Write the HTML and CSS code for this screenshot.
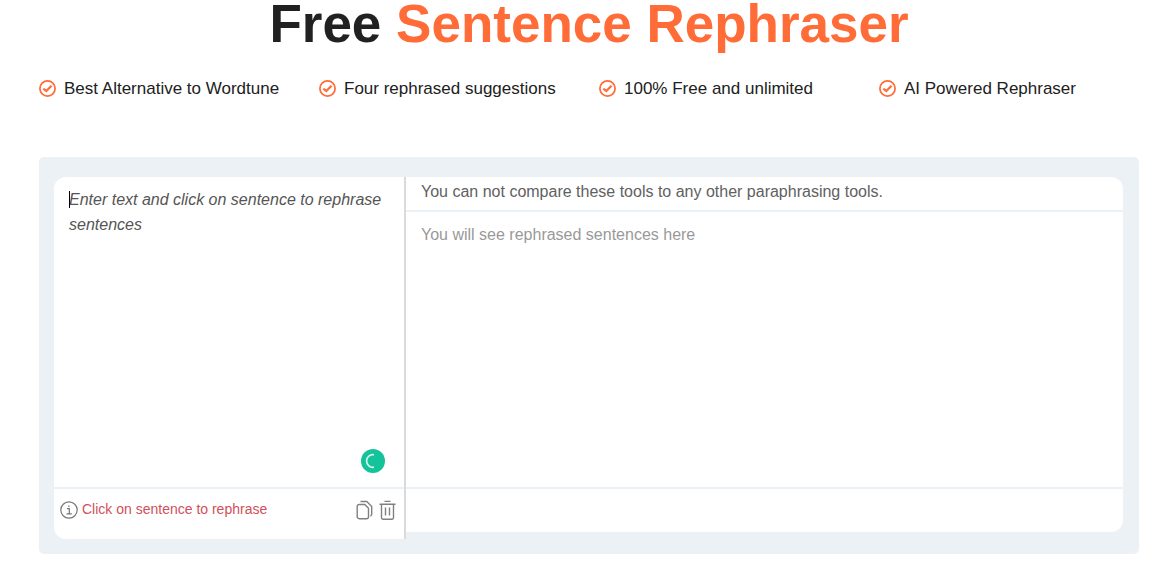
FILE: index.html
```
<!DOCTYPE html>
<html lang="en">
	<head>
		<title>Free Sentence Rephraser</title>
		<meta charset="UTF-8" />
		<meta name="viewport" content="width=device-width, initial-scale=1" />
		<link rel="stylesheet" href="styles.css">
	</head>
	<body>
		<main class="page">
			<h1 class="title">Free <span class="accent">Sentence Rephraser</span></h1>

			<!-- Features -->
			<ul class="features">
				<li>
					<svg class="check" viewBox="0 0 17 17"><circle cx="8.5" cy="8.5" r="7.6"/><path d="M4.4 8.6l2.9 2.5 5.2-5.4"/></svg>
					Best Alternative to Wordtune
				</li>
				<li>
					<svg class="check" viewBox="0 0 17 17"><circle cx="8.5" cy="8.5" r="7.6"/><path d="M4.4 8.6l2.9 2.5 5.2-5.4"/></svg>
					Four rephrased suggestions
				</li>
				<li>
					<svg class="check" viewBox="0 0 17 17"><circle cx="8.5" cy="8.5" r="7.6"/><path d="M4.4 8.6l2.9 2.5 5.2-5.4"/></svg>
					100% Free and unlimited
				</li>
				<li>
					<svg class="check" viewBox="0 0 17 17"><circle cx="8.5" cy="8.5" r="7.6"/><path d="M4.4 8.6l2.9 2.5 5.2-5.4"/></svg>
					AI Powered Rephraser
				</li>
			</ul>

			<!-- Rephraser tool -->
			<div class="tool">
				<section class="input-side">
					<div class="editor">
						<textarea id="sentence" aria-label="Text to rephrase" placeholder="Enter text and click on sentence to rephrase sentences"></textarea>
						<span class="caret"></span>
						<svg class="status" viewBox="0 0 24 24"><circle cx="12" cy="12" r="12"/><path d="M13 5.8a6.3 6.3 0 1 0 0 12.4"/></svg>
					</div>
					<div class="input-footer">
						<svg class="info" viewBox="0 0 18 18"><circle cx="9" cy="9" r="8.2"/><path d="M7 7.7h2.3v5M6.5 12.9h5.3M8.9 4.6v1.5"/></svg>
						<label class="hint" for="sentence">Click on sentence to rephrase</label>
						<div class="actions">
							<button type="button" aria-label="Copy">
								<svg width="17" height="20" viewBox="0 0 17 20"><path d="M3.2 4.5h5.6l3.7 3.8v8.4a2 2 0 0 1-2 2H3.2a2 2 0 0 1-2-2V6.5a2 2 0 0 1 2-2z"/><path d="M4.5 1.5h6.3l4.9 5v7.6a2 2 0 0 1-1.4 2"/></svg>
							</button>
							<button type="button" aria-label="Delete">
								<svg width="17" height="20" viewBox="0 0 17 20"><path d="M.5 4.2h16M5.5 1.4h6M2.5 4.2v13.6a1.4 1.4 0 0 0 1.4 1.4h9.2a1.4 1.4 0 0 0 1.4-1.4V4.2M6.5 7.5v8M10.5 7.5v8"/></svg>
							</button>
						</div>
					</div>
				</section>
				<section class="output-side">
					<p class="note">You can not compare these tools to any other paraphrasing tools.</p>
					<p class="output">You will see rephrased sentences here</p>
					<div class="output-footer"></div>
				</section>
			</div>
		</main>
	</body>
</html>
```
FILE: styles.css
```
* {
	box-sizing: border-box;
}

body {
	margin: 0;
	background: #fff;
	color: #212121;
	font-family: Arial, "Liberation Sans", sans-serif;
	font-size: 16px;
}

.page {
	padding: 0 34px 16px 39px;
}

.title {
	margin: 0;
	font-size: 53px;
	line-height: 48px;
	text-align: center;
}

.accent {
	color: #ff6c37;
}

.features {
	display: grid;
	grid-template-columns: repeat(4, 1fr);
	column-gap: 20px;
	margin: 28px 0 56px;
	padding: 0;
	list-style: none;
	font-size: 17px;
	line-height: 25px;
}

.features li {
	display: flex;
	align-items: center;
	gap: 8px;
	white-space: nowrap;
}

.check {
	width: 17px;
	height: 17px;
	fill: none;
	stroke: #ff6c37;
	stroke-width: 1.7;
}

.check path {
	stroke-width: 2.2;
}

.tool {
	display: flex;
	align-items: flex-start;
	padding: 20px 16px 15px 15px;
	background: #ecf1f6;
	border-radius: 5px;
}

.input-side {
	flex: 0 0 352px;
	background: #fff;
	border-right: 2px solid #d9dadb;
	border-radius: 12px 0 0 12px;
}

.editor {
	position: relative;
	height: 312px;
	border-bottom: 2px solid #ecf1f6;
}

.editor textarea {
	display: block;
	width: 100%;
	height: 100%;
	padding: 10px 15px;
	border: none;
	outline: none;
	background: none;
	resize: none;
	font: italic 16px/25px Arial, "Liberation Sans", sans-serif;
}

.editor textarea::placeholder {
	color: #555;
}

.caret {
	position: absolute;
	top: 14px;
	left: 15px;
	width: 1px;
	height: 17px;
	background: #000;
}

.status {
	position: absolute;
	right: 19px;
	bottom: 14px;
	width: 24px;
	height: 24px;
	fill: #15c39a;
}

.status path {
	fill: none;
	stroke: #d5f5ec;
	stroke-width: 1.7;
}

.input-footer {
	display: flex;
	align-items: center;
	height: 50px;
	padding: 0 8px 8px 6px;
}

.info {
	width: 18px;
	height: 18px;
	margin-right: 4px;
	fill: none;
	stroke: #777;
	stroke-width: 1.2;
}

.hint {
	padding-bottom: 2px;
	color: #d0505a;
	font-size: 14px;
}

.actions {
	display: flex;
	gap: 6px;
	margin-left: auto;
}

.actions button {
	padding: 0;
	border: none;
	background: none;
	cursor: pointer;
}

.actions svg {
	display: block;
	fill: none;
	stroke: #808080;
	stroke-width: 1.4;
}

.output-side {
	flex: 1;
	background: #fff;
	border-radius: 0 12px 12px 0;
}

.note {
	margin: 0;
	padding: 2px 15px 6px;
	border-bottom: 2px solid #ecf1f6;
	color: #616161;
	line-height: 25px;
}

.output {
	min-height: 275px;
	margin: 0;
	padding: 10px 15px;
	color: #999;
	line-height: 25px;
}

.output-footer {
	height: 45px;
	border-top: 2px solid #ecf1f6;
}
```
